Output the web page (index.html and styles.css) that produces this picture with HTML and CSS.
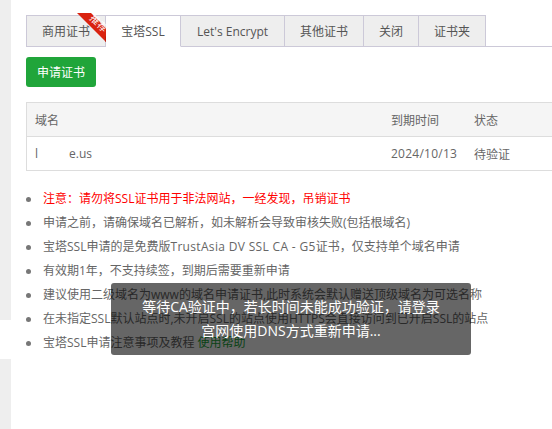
FILE: index.html
```html
<!DOCTYPE html>
<html lang="zh">
<head>
<meta charset="utf-8">
<title>SSL</title>
<link rel="stylesheet" href="styles.css">
</head>
<body>
<div class="side">
  <div class="side-a"></div>
  <div class="side-b"></div>
  <div class="side-c"></div>
</div>
<main class="main">
  <div class="tabs">
    <div class="tab tab-first">商用证书<span class="ribbon"><svg class="ribbon-svg" width="31" height="31" viewBox="0 0 31 31"><path class="rib" d="M0 0H14L30 16V30L29 29Z"/><path class="rib-fold" d="M28 24L30 22V30L28 28Z"/></svg><span class="ribbon-text">推荐</span></span></div>
    <div class="tab tab-on">宝塔SSL</div>
    <div class="tab tab-le">Let's Encrypt</div>
    <div class="tab tab-other">其他证书</div>
    <div class="tab tab-close">关闭</div>
    <div class="tab tab-folder">证书夹</div>
  </div>
  <button class="apply">申请证书</button>
  <div class="table">
    <div class="row head">
      <div class="c-domain">域名</div>
      <div class="c-date">到期时间</div>
      <div class="c-state">状态</div>
    </div>
    <div class="row">
      <div class="c-domain"><span class="d-a">l</span><span class="d-b">e.us</span></div>
      <div class="c-date c-num">2024/10/13</div>
      <div class="c-state">待验证</div>
    </div>
  </div>
  <ul class="notes">
    <li class="warn">注意：请勿将SSL证书用于非法网站，一经发现，吊销证书</li>
    <li>申请之前，请确保域名已解析，如未解析会导致审核失败(包括根域名)</li>
    <li>宝塔SSL申请的是免费版<span class="latin">TrustAsia DV SSL CA - G5</span>证书，仅支持单个域名申请</li>
    <li>有效期1年，不支持续签，到期后需要重新申请</li>
    <li>建议使用二级域名为www的域名申请证书,此时系统会默认赠送顶级域名为可选名称</li>
    <li>在未指定SSL默认站点时,未开启SSL的站点使用HTTPS会直接访问到已开启SSL的站点</li>
    <li>宝塔SSL申请注意事项及教程 <a class="help">使用帮助</a></li>
  </ul>
</main>
<div class="toast">等待CA验证中，若长时间未能成功验证，请登录<br>宫网使用DNS方式重新申请...</div>
</body>
</html>
```
FILE: styles.css
```css
html, body { margin: 0; padding: 0; height: 429px; overflow: hidden; background: #fff; }
body { display: flex; font-family: "Open Sans", "Noto Sans CJK SC", sans-serif; font-size: 12px; color: #666; position: relative; }
.side { width: 11px; flex: none; display: flex; flex-direction: column; }
.side-a { height: 320px; background: #eee; }
.side-b { height: 39px; background: #fff; }
.side-c { flex: 1; background: #eee; }
.main { flex: 1; min-width: 0; padding: 15px 0 0 15px; box-sizing: border-box; }
.tabs { display: flex; height: 32px; box-sizing: border-box; border-bottom: 1px solid #ccc9d8; }
.tab { position: relative; height: 32px; box-sizing: border-box; padding-top: 1px; display: flex; align-items: center; justify-content: center; background: #eee; border: 1px solid #ccc9d8; border-left-width: 0; color: #555; font-size: 12px; line-height: 30px; }
.tab-first { width: 80px; border-left-width: 1px; }
.tab-on { width: 75px; background: #fff; border-bottom-color: #fff; }
.tab-le { width: 104px; }
.tab-other { width: 79px; }
.tab-close { width: 55px; }
.tab-folder { width: 67px; }
.ribbon { position: absolute; left: 50px; top: -3px; width: 31px; height: 31px; }
.ribbon-svg { display: block; }
.rib { fill: #d9230f; }
.rib-fold { fill: #b81d0c; }
.ribbon-text { position: absolute; left: 5px; top: 5px; width: 34px; text-align: center; color: #fff; font-size: 10px; line-height: 10px; transform: rotate(45deg); }
.apply { display: block; margin: 10px 0 0; width: 70px; height: 30px; padding: 0; background: #20a53a; border: 0; border-radius: 3px; color: #fff; font-family: inherit; font-size: 12px; }
.table { margin-top: 15px; border: 1px solid #ddd; border-right: 0; }
.row { display: flex; align-items: center; height: 33px; }
.head { background: #f5f5f5; border-bottom: 1px solid #ddd; }
.c-domain { width: 364px; padding-left: 8px; box-sizing: border-box; }
.c-date { width: 83px; }
.c-num { letter-spacing: .25px; }
.c-state { flex: 1; }
.d-a { display: inline-block; width: 34px; }
.notes { margin: 16px 0 0; padding: 0 0 0 17px; list-style: none; line-height: 24px; }
.notes li { height: 24px; white-space: nowrap; }
.notes li::before { content: ""; display: inline-block; width: 5px; height: 5px; margin: 0 12px 0 -17px; border-radius: 50%; background: #777; vertical-align: middle; }
.latin { letter-spacing: .33px; }
.warn { color: #f00; }
.help { color: #20a53a; }
.toast { position: absolute; left: 111px; top: 283px; width: 360px; height: 72px; box-sizing: border-box; padding-top: 12px; border-radius: 3px; background: rgba(0,0,0,.6); color: #fff; font-size: 14px; line-height: 24px; text-align: center; }
```
